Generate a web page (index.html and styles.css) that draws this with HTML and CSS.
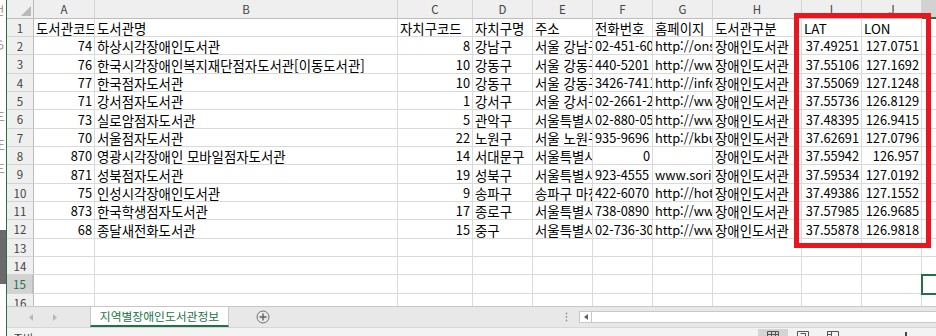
FILE: index.html
```html
<!DOCTYPE html>
<html lang="ko">
<head>
    <meta charset="UTF-8">
    <meta name="viewport" content="width=device-width, initial-scale=1.0">
    <title>지역별장애인도서관정보 - Excel</title>
    <link rel="stylesheet" href="styles.css">
</head>
<body>
<div class="window">
    <div class="desk-edge">
        <span class="frag f1">건</span>
        <span class="frag f2">ら</span>
        <span class="frag f3">三</span>
        <span class="frag f4">王</span>
        <span class="frag f5">三</span>
        <div class="dark-block"></div>
    </div>

    <div class="excel">
        <div class="grid-area">
            <table class="sheet">
                <colgroup>
                    <col class="c-rh"><col class="c-a"><col class="c-b"><col class="c-c"><col class="c-d"><col class="c-e">
                    <col class="c-f"><col class="c-g"><col class="c-h"><col class="c-i"><col class="c-j"><col class="c-k">
                </colgroup>
                <tr class="heads">
                    <th class="corner"><svg width="10" height="10" viewBox="0 0 10 10"><polygon points="10,0 10,10 0,10" fill="#b9b9b9"/></svg></th>
                    <th>A</th><th>B</th><th>C</th><th>D</th><th>E</th><th>F</th><th>G</th><th>H</th><th>I</th><th>J</th><th class="sel">K</th>
                </tr>
                <tr><th>1</th><td>도서관코드</td><td>도서관명</td><td>자치구코드</td><td>자치구명</td><td>주소</td><td>전화번호</td><td>홈페이지</td><td>도서관구분</td><td>LAT</td><td>LON</td><td></td></tr>
                <tr><th>2</th><td class="n">74</td><td>하상시각장애인도서관</td><td class="n">8</td><td>강남구</td><td>서울 강남구</td><td class="t">02-451-6000</td><td class="t">http://onse</td><td>장애인도서관</td><td class="n">37.49251</td><td class="n">127.0751</td><td></td></tr>
                <tr><th>3</th><td class="n">76</td><td>한국시각장애인복지재단점자도서관[이동도서관]</td><td class="n">10</td><td>강동구</td><td>서울 강동구</td><td class="t">440-5201</td><td class="t">http://www</td><td>장애인도서관</td><td class="n">37.55106</td><td class="n">127.1692</td><td></td></tr>
                <tr><th>4</th><td class="n">77</td><td>한국점자도서관</td><td class="n">10</td><td>강동구</td><td>서울 강동구</td><td class="t">3426-7411</td><td class="t">http://info</td><td>장애인도서관</td><td class="n">37.55069</td><td class="n">127.1248</td><td></td></tr>
                <tr><th>5</th><td class="n">71</td><td>강서점자도서관</td><td class="n">1</td><td>강서구</td><td>서울 강서구</td><td class="t">02-2661-2278</td><td class="t">http://www</td><td>장애인도서관</td><td class="n">37.55736</td><td class="n">126.8129</td><td></td></tr>
                <tr><th>6</th><td class="n">73</td><td>실로암점자도서관</td><td class="n">5</td><td>관악구</td><td>서울특별시</td><td class="t">02-880-0500</td><td class="t">http://www</td><td>장애인도서관</td><td class="n">37.48395</td><td class="n">126.9415</td><td></td></tr>
                <tr><th>7</th><td class="n">70</td><td>서울점자도서관</td><td class="n">22</td><td>노원구</td><td>서울 노원구</td><td class="t">935-9696</td><td class="t">http://kbu</td><td>장애인도서관</td><td class="n">37.62691</td><td class="n">127.0796</td><td></td></tr>
                <tr><th>8</th><td class="n">870</td><td>영광시각장애인 모바일점자도서관</td><td class="n">14</td><td>서대문구</td><td>서울특별시</td><td class="n">0</td><td></td><td>장애인도서관</td><td class="n">37.55942</td><td class="n">126.957</td><td></td></tr>
                <tr><th>9</th><td class="n">871</td><td>성북점자도서관</td><td class="n">19</td><td>성북구</td><td>서울특별시</td><td class="t">923-4555</td><td class="t">www.sorim</td><td>장애인도서관</td><td class="n">37.59534</td><td class="n">127.0192</td><td></td></tr>
                <tr><th>10</th><td class="n">75</td><td>인성시각장애인도서관</td><td class="n">9</td><td>송파구</td><td>송파구 마천</td><td class="t">422-6070</td><td class="t">http://hotl</td><td>장애인도서관</td><td class="n">37.49386</td><td class="n">127.1552</td><td></td></tr>
                <tr><th>11</th><td class="n">873</td><td>한국학생점자도서관</td><td class="n">17</td><td>종로구</td><td>서울특별시</td><td class="t">738-0890</td><td class="t">http://www</td><td>장애인도서관</td><td class="n">37.57985</td><td class="n">126.9685</td><td></td></tr>
                <tr><th>12</th><td class="n">68</td><td>종달새전화도서관</td><td class="n">15</td><td>중구</td><td>서울특별시</td><td class="t">02-736-3030</td><td class="t">http://www</td><td>장애인도서관</td><td class="n">37.55878</td><td class="n">126.9818</td><td></td></tr>
                <tr><th>13</th><td></td><td></td><td></td><td></td><td></td><td></td><td></td><td></td><td></td><td></td><td></td></tr>
                <tr><th>14</th><td></td><td></td><td></td><td></td><td></td><td></td><td></td><td></td><td></td><td></td><td></td></tr>
                <tr><th class="sel">15</th><td></td><td></td><td></td><td></td><td></td><td></td><td></td><td></td><td></td><td></td><td class="active"></td></tr>
                <tr><th>16</th><td></td><td></td><td></td><td></td><td></td><td></td><td></td><td></td><td></td><td></td><td></td></tr>
            </table>
            <div class="mark"></div>
        </div>

        <div class="tabs">
            <div class="tab-nav">
                <svg width="5" height="7" viewBox="0 0 5 7"><polygon points="4,0 4,7 0,3.5" fill="#b8b8b8"/></svg>
                <svg width="5" height="7" viewBox="0 0 5 7"><polygon points="1,0 1,7 5,3.5" fill="#b8b8b8"/></svg>
            </div>
            <div class="sheet-tab">지역별장애인도서관정보</div>
            <svg class="add-sheet" width="14" height="14" viewBox="0 0 14 14">
                <circle cx="7" cy="7" r="6" fill="none" stroke="#707070" stroke-width="1"/>
                <path d="M7 3.5v7M3.5 7h7" stroke="#606060" stroke-width="1.4"/>
            </svg>
            <svg class="split" width="3" height="10" viewBox="0 0 3 10">
                <circle cx="1.5" cy="1.5" r="0.9" fill="#9a9a9a"/>
                <circle cx="1.5" cy="5" r="0.9" fill="#9a9a9a"/>
                <circle cx="1.5" cy="8.5" r="0.9" fill="#9a9a9a"/>
            </svg>
            <div class="hscroll">
                <div class="hs-btn"><svg width="4" height="6" viewBox="0 0 4 6"><polygon points="4,0 4,6 0,3" fill="#606060"/></svg></div>
            </div>
        </div>

        <div class="status">
            <span class="ready">준비</span>
            <div class="views">
                <div class="view on"><svg width="12" height="10" viewBox="0 0 12 10"><path d="M0.5 0.5h11v9h-11zM0.5 3.5h11M4.5 0.5v9M8.5 0.5v9" fill="none" stroke="#555"/></svg></div>
                <div class="view"><svg width="12" height="10" viewBox="0 0 12 10"><path d="M0.5 0.5h11v9h-11zM3.5 2.5h5v7" fill="none" stroke="#555"/></svg></div>
                <div class="view"><svg width="12" height="10" viewBox="0 0 12 10"><path d="M0.5 0.5h11v9h-11zM4.5 0.5v9M0.5 3.5h4" fill="none" stroke="#555"/></svg></div>
            </div>
            <div class="zoom-thumb"></div>
        </div>
    </div>
</div>
</body>
</html>
```

FILE: styles.css
```css
* { box-sizing: border-box; }
body {
    margin: 0;
    background: #fff;
    font-family: "Noto Sans CJK KR", sans-serif;
}
.window {
    display: flex;
    width: 936px;
    height: 336px;
    overflow: hidden;
}

/* sliver of the window behind excel */
.desk-edge {
    width: 6px;
    flex: none;
    display: flex;
    flex-direction: column;
    overflow: hidden;
    background: #fff;
}
.frag {
    flex: none;
    height: 12px;
    overflow: hidden;
    font-size: 11px;
    line-height: 12px;
    color: #8a8a8a;
    margin-left: -6px;
}
.f1 { margin-top: 4px; }
.f2 { margin-top: 22px; }
.f3 { margin-top: 60px; }
.f4 { margin-top: 16px; }
.f5 { margin-top: 12px; }
.dark-block {
    flex: none;
    margin-top: 56px;
    height: 54px;
    background: #6a6a6a;
}

.excel {
    flex: 1;
    min-width: 0;
    display: flex;
    flex-direction: column;
    border-left: 1px solid #217346;
}
.grid-area {
    height: 306px;
    flex: none;
    overflow: hidden;
    position: relative;
}

.sheet {
    table-layout: fixed;
    border-collapse: separate;
    border-spacing: 0;
    width: 975px;
}
.c-rh { width: 27px; }
.c-a { width: 61px; }
.c-b { width: 303px; }
.c-c { width: 75px; }
.c-d, .c-e, .c-f, .c-g, .c-i, .c-j, .c-k { width: 60px; }
.c-h { width: 89px; }

.sheet tr { height: 18px; }
.sheet tr:nth-child(3n+1) { height: 19px; }

.sheet td {
    padding: 0 2px;
    border-right: 1px solid #dadada;
    border-bottom: 1px solid #dadada;
    font-size: 13.4px;
    line-height: 16px;
    color: #000;
    white-space: nowrap;
    overflow: hidden;
    vertical-align: bottom;
}
.sheet td.n, .sheet td.t { font-size: 12.8px; }
.sheet td.n { text-align: right; }
.sheet td.active {
    outline: 2px solid #217346;
    outline-offset: -1px;
}

.sheet th {
    padding: 0;
    background: #efefef;
    color: #444;
    font-size: 11.5px;
    font-weight: normal;
    line-height: 14px;
    text-align: center;
    vertical-align: middle;
    border-right: 1px solid #d4d4d4;
    border-bottom: 1px solid #d4d4d4;
}
.sheet .heads th { border-bottom-color: #bdbdbd; }
.sheet tr th:first-child { border-right-color: #bdbdbd; }
.sheet .heads th.sel {
    background: #d2d2d2;
    border-bottom: 2px solid #217346;
}
.sheet th.sel {
    background: #d2d2d2;
    color: #217346;
    border-right: 2px solid #217346;
}
.sheet th.corner {
    text-align: right;
    vertical-align: bottom;
    line-height: 0;
    padding: 0 2px 2px 0;
}

/* the red annotation drawn over LAT / LON */
.mark {
    position: absolute;
    left: 787px;
    top: 13px;
    width: 137px;
    height: 235px;
    border: 5px solid #e8161f;
}

.tabs {
    height: 21px;
    flex: none;
    display: flex;
    align-items: center;
    background: #e8e8e8;
    border-top: 1px solid #c8c8c8;
    overflow: hidden;
}
.tab-nav {
    width: 83px;
    flex: none;
    display: flex;
    gap: 18px;
    padding-left: 22px;
}
.sheet-tab {
    width: 139px;
    flex: none;
    align-self: stretch;
    background: #fff;
    border-left: 1px solid #c8c8c8;
    border-right: 1px solid #c8c8c8;
    border-bottom: 2px solid #217346;
    color: #217346;
    font-size: 11.8px;
    line-height: 18px;
    text-align: center;
}
.add-sheet {
    flex: none;
    margin-left: 27px;
}
.split {
    flex: none;
    margin-left: 295px;
}
.hscroll {
    flex: none;
    width: 380px;
    height: 12px;
    margin-left: 11px;
    background: #fff;
    border: 1px solid #c8c8c8;
    display: flex;
}
.hs-btn {
    width: 12px;
    border-right: 1px solid #c8c8c8;
    display: flex;
    align-items: center;
    justify-content: center;
}

.status {
    flex: 1;
    display: flex;
    align-items: flex-start;
    background: #f3f3f3;
    border-top: 1px solid #d6d6d6;
    overflow: hidden;
}
.ready {
    padding-left: 6px;
    margin-top: 3px;
    font-size: 11px;
    line-height: 14px;
    color: #444;
}
.views {
    display: flex;
    margin-left: 725px;
    margin-top: 1px;
}
.view {
    width: 30px;
    height: 12px;
    display: flex;
    justify-content: center;
    padding-top: 2px;
}
.view.on { background: #d4d4d4; }
.zoom-thumb {
    width: 2px;
    height: 10px;
    margin-left: 57px;
    margin-top: 4px;
    background: #444;
}
```
